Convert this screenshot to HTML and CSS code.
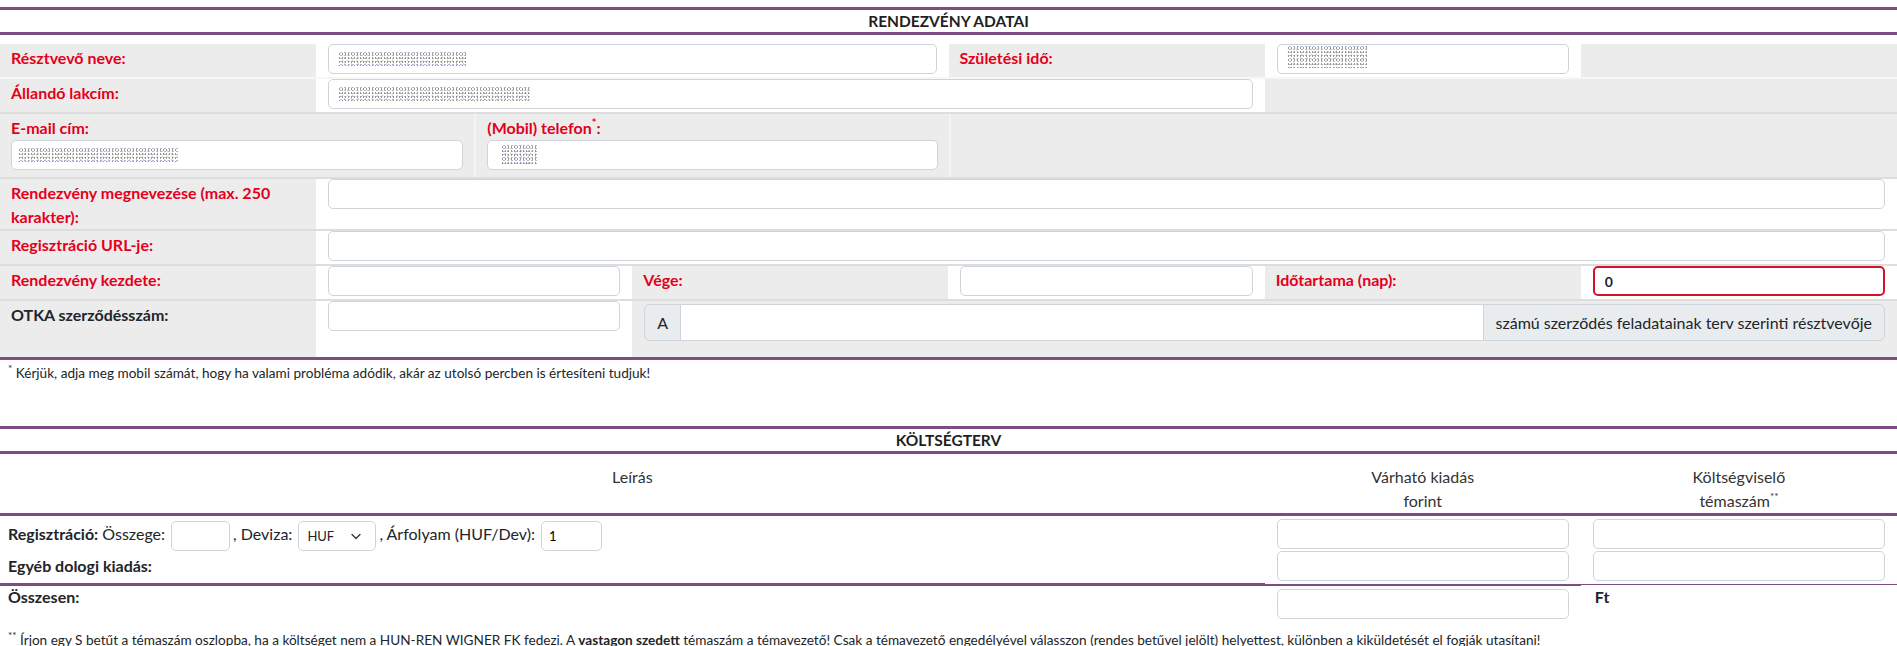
FILE: index.html
```html
<!DOCTYPE html>
<html lang="hu">
<head>
    <meta charset="UTF-8">
    <meta name="viewport" content="width=device-width, initial-scale=1.0">
    <title>Rendezvény adatai</title>
    <link rel="stylesheet" href="styles.css">
</head>
<body>
    <div class="band">RENDEZVÉNY ADATAI</div>

    <div class="form-grid">
        <div class="row">
            <div class="lbl c2">Résztvevő neve:</div>
            <div class="fld c4"><div class="form-control"><span class="redacted r-name"></span></div></div>
            <div class="lbl c2">Születési idő:</div>
            <div class="fld c2"><div class="form-control"><span class="redacted r-birth"></span></div></div>
            <div class="gray c2"></div>
        </div>
        <div class="row light">
            <div class="lbl c2">Állandó lakcím:</div>
            <div class="fld c6"><div class="form-control"><span class="redacted r-addr"></span></div></div>
            <div class="gray c4"></div>
        </div>
        <div class="row">
            <div class="lbl stack c3">
                E-mail cím:
                <div class="form-control"><span class="redacted r-mail"></span></div>
            </div>
            <div class="lbl stack sep c3">
                <span>(Mobil) telefon<sup>*</sup>:</span>
                <div class="form-control"><span class="redacted r-phone"></span></div>
            </div>
            <div class="gray sep c6"></div>
        </div>
        <div class="row">
            <div class="lbl c2">Rendezvény megnevezése (max. 250 karakter):</div>
            <div class="fld c10"><input class="form-control" type="text"></div>
        </div>
        <div class="row">
            <div class="lbl c2">Regisztráció URL-je:</div>
            <div class="fld c10"><input class="form-control" type="text"></div>
        </div>
        <div class="row">
            <div class="lbl c2">Rendezvény kezdete:</div>
            <div class="fld c2"><input class="form-control" type="text"></div>
            <div class="lbl c2">Vége:</div>
            <div class="fld c2"><input class="form-control" type="text"></div>
            <div class="lbl c2">Időtartama (nap):</div>
            <div class="fld c2"><input class="form-control invalid" type="text" value="0"></div>
        </div>
        <div class="row">
            <div class="lbl plain c2">OTKA szerződésszám:</div>
            <div class="fld c2"><input class="form-control" type="text"></div>
            <div class="gray group-cell c8">
                <div class="input-group">
                    <span class="addon first">A</span>
                    <input type="text">
                    <span class="addon last">számú szerződés feladatainak terv szerinti résztvevője</span>
                </div>
            </div>
        </div>
    </div>

    <div class="note first-note"><sup>*</sup> Kérjük, adja meg mobil számát, hogy ha valami probléma adódik, akár az utolsó percben is értesíteni tudjuk!</div>

    <div class="band">KÖLTSÉGTERV</div>

    <div class="cost-head">
        <div class="c8">Leírás</div>
        <div class="c2">Várható kiadás<br>forint</div>
        <div class="c2">Költségviselő<br>témaszám<sup>**</sup></div>
    </div>

    <div class="cost-body">
        <div class="cost-row first-row">
            <div class="c8 desc"><b>Regisztráció:</b> Összege:<input class="mini w-sum" type="text">, Deviza:<span class="select-wrap"><select class="mini-select"><option>HUF</option></select><svg class="chev" width="10" height="7" viewBox="0 0 10 7"><path d="M1 1.5l4 4 4-4" fill="none" stroke="#343a40" stroke-width="1.4" stroke-linecap="round" stroke-linejoin="round"/></svg></span>, Árfolyam (HUF/Dev):<input class="mini w-rate" type="text" value="1"></div>
            <div class="c2 fld"><input class="form-control" type="text"></div>
            <div class="c2 fld"><input class="form-control" type="text"></div>
        </div>
        <div class="cost-row">
            <div class="c8 desc"><b>Egyéb dologi kiadás:</b></div>
            <div class="c2 fld"><input class="form-control" type="text"></div>
            <div class="c2 fld"><input class="form-control" type="text"></div>
        </div>
    </div>

    <div class="cost-total">
        <div class="c8 desc top"><b>Összesen:</b></div>
        <div class="c2 fld"><input class="form-control" type="text"></div>
        <div class="c2 fld top"><b>Ft</b></div>
    </div>

    <div class="note last-note"><sup>**</sup> Írjon egy S betűt a témaszám oszlopba, ha a költséget nem a HUN-REN WIGNER FK fedezi. A <b>vastagon szedett</b> témaszám a témavezető! Csak a témavezető engedélyével válasszon (rendes betűvel jelölt) helyettest, különben a kiküldetését el fogják utasítani!</div>
</body>
</html>
```

FILE: styles.css
```css
* {
    box-sizing: border-box;
}
body {
    margin: 0;
    padding-top: 7px;
    font-family: "Segoe UI", Lato, "Noto Sans", sans-serif;
    font-size: 16px;
    line-height: 24px;
    color: #212529;
    background: #ffffff;
}
.band {
    border-top: 3px solid #7d4c82;
    border-bottom: 3px solid #7d4c82;
    height: 28px;
    line-height: 22px;
    text-align: center;
    font-weight: bold;
    font-size: 15.5px;
    color: #1f1f1f;
}
.form-grid {
    margin-top: 9px;
}
.row, .cost-head, .cost-row, .cost-total {
    display: grid;
    grid-template-columns: repeat(12, 1fr);
}
.row + .row {
    border-top: 2px solid #dddddd;
}
.row.light {
    border-top-color: #f7f7f7;
}
.c2 { grid-column: span 2; }
.c3 { grid-column: span 3; }
.c4 { grid-column: span 4; }
.c6 { grid-column: span 6; }
.c8 { grid-column: span 8; }
.c10 { grid-column: span 10; }

.lbl {
    background: #ececec;
    padding: 2px 11px 0;
    font-weight: bold;
    color: #e4001b;
}
.lbl.plain {
    color: #212529;
}
.lbl.stack {
    padding-bottom: 7px;
}
.lbl sup {
    font-size: 11px;
    line-height: 0;
    vertical-align: 7px;
}
.sep {
    border-left: 2px solid #f4f4f4;
}
.gray {
    background: #ececec;
}
.fld {
    background: #ffffff;
    padding: 0 12px 3px;
}
.form-control {
    display: flex;
    align-items: center;
    width: 100%;
    height: 30px;
    padding: 0 9px;
    border: 1px solid #ced4da;
    border-radius: 5px;
    background: #ffffff;
    font-family: inherit;
    font-size: 14px;
    color: #212529;
    outline: none;
}
.form-control.invalid {
    border: 2px solid #d3132b;
    font-weight: bold;
    padding: 0 10px;
}
.redacted {
    display: inline-block;
    height: 14px;
    opacity: 0.5;
    background:
        radial-gradient(circle, rgba(30, 30, 30, 0.9) 0.7px, transparent 1.1px) 0 0 / 3px 4px,
        radial-gradient(circle, rgba(60, 90, 150, 0.8) 0.7px, transparent 1.1px) 1px 2px / 4px 3px,
        radial-gradient(circle, rgba(160, 130, 50, 0.7) 0.7px, transparent 1.1px) 2px 1px / 5px 5px,
        radial-gradient(circle, rgba(120, 120, 120, 0.7) 0.7px, transparent 1.1px) 3px 3px / 7px 6px;
}
.r-name { width: 128px; }
.r-addr { width: 192px; }
.r-mail { width: 160px; margin-left: -3px; }
.r-phone { width: 37px; height: 20px; margin-left: 4px; }
.r-birth { width: 80px; height: 22px; align-self: flex-start; margin-top: 1px; }

.group-cell {
    padding: 3px 12px 16px;
}
.input-group {
    display: flex;
    height: 37px;
}
.input-group input {
    flex: 1;
    min-width: 0;
    border: 1px solid #ced4da;
    border-left: 0;
    border-right: 0;
    outline: none;
    font: inherit;
}
.addon {
    display: flex;
    align-items: center;
    padding: 0 12px;
    background: #e9ecef;
    border: 1px solid #ced4da;
    color: #212529;
    white-space: nowrap;
}
.addon.first {
    border-radius: 6px 0 0 6px;
}
.addon.last {
    border-radius: 0 6px 6px 0;
}

.note {
    font-size: 13.6px;
    line-height: 21px;
    padding: 3px 8px 0;
}
.note sup {
    font-size: 10px;
    line-height: 0;
    vertical-align: 6px;
}
.first-note {
    border-top: 3px solid #7d4c82;
    height: 69px;
}
.last-note {
    padding-top: 8px;
}

.cost-head {
    padding-top: 11px;
    border-bottom: 3px solid #7d4c82;
    text-align: center;
    color: #333333;
}
.cost-head sup {
    font-size: 10px;
    line-height: 0;
    vertical-align: 7px;
}
.cost-body {
    border-bottom: 3px solid #7d4c82;
}
.cost-row {
    height: 33px;
    padding-top: 1px;
}
.cost-row.first-row {
    height: 34px;
    padding-top: 3px;
}
.desc {
    padding-left: 8px;
    line-height: 30px;
    white-space: nowrap;
}
.cost-total {
    padding-top: 3px;
}
.cost-total .top {
    line-height: 24px;
    margin-top: -4px;
}
.cost-total .fld.top {
    padding-left: 14px;
}
.mini {
    width: 59px;
    height: 30px;
    margin: 0 3px 0 6px;
    padding: 0 7px;
    vertical-align: middle;
    border: 1px solid #ced4da;
    border-radius: 5px;
    font-family: inherit;
    font-size: 13px;
    outline: none;
}
.mini.w-rate {
    width: 61px;
}
.select-wrap {
    position: relative;
    display: inline-block;
    vertical-align: middle;
    height: 30px;
    margin: 0 3px 0 6px;
}
.mini-select {
    appearance: none;
    -webkit-appearance: none;
    display: block;
    width: 78px;
    height: 30px;
    padding: 0 24px 0 8px;
    border: 1px solid #ced4da;
    border-radius: 5px;
    background: #ffffff;
    font-family: inherit;
    font-size: 13px;
    color: #212529;
}
.chev {
    position: absolute;
    right: 15px;
    top: 12px;
}
```
